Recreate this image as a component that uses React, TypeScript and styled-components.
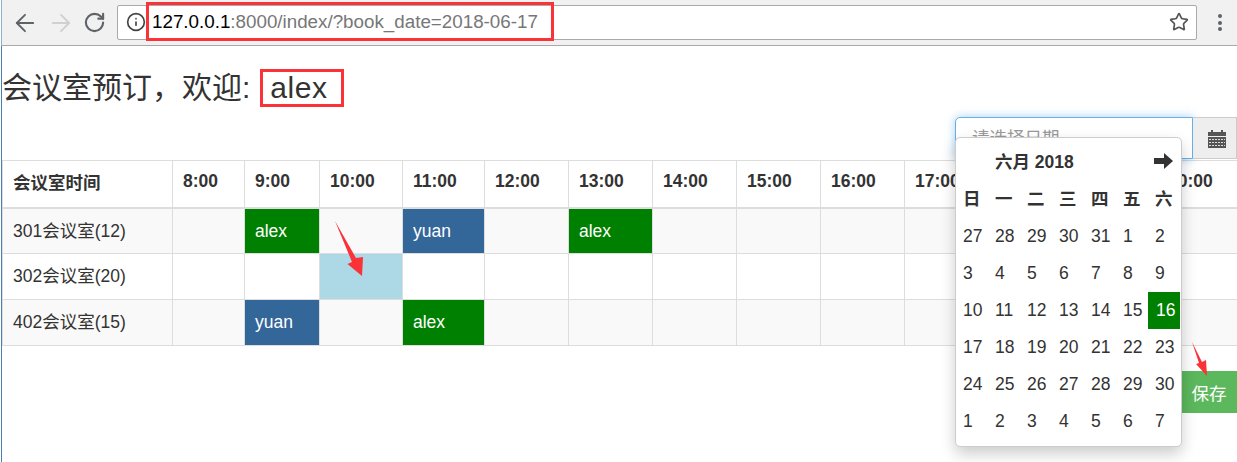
import React from "react";
import styled, { createGlobalStyle } from "styled-components";
import { ArrowLeft, ArrowRight, RotateCw, Info, Star } from "lucide-react";

const Global = createGlobalStyle`
  html, body { margin: 0; padding: 0; background: #fff; overflow: hidden; }
  body { font-family: "Liberation Sans", "Noto Sans CJK SC", sans-serif; font-size: 17.5px; color: #333; }
`;
const Page = styled.div`
  position: relative; width: 1237px; height: 462px; overflow: hidden;
`;
const Chrome = styled.div`
  height: 45px; background: #f1f1f1; border-bottom: 1px solid #a9a9a9; border-left: 1px solid #8fb0cf; margin-left: 1px;
  display: flex; align-items: center; padding: 0 0 0 9px;
`;
const NavIcons = styled.div`display: flex; align-items: center; gap: 8px; width: 106px; flex: none; color: #5f6368;`;
const Omnibox = styled.div`
  width: 1080px; height: 35px; box-sizing: border-box; margin-top: -1px; background: #fff; border: 1px solid #a9a9a9; border-radius: 2px;
  display: flex; align-items: center; padding: 0 7px 0 8px; gap: 6px; flex: none;
`;
const Url = styled.div`flex: 1; font-size: 18.8px; color: #777; white-space: nowrap;`;
const Host = styled.span`color: #000;`;
const Menu = styled.div`margin-left: 21px; display: flex; flex-direction: column; gap: 2.5px;`;
const MenuDot = styled.i`width: 4px; height: 4px; border-radius: 50%; background: #5f6368; display: block;`;
const Main = styled.main`border-left: 1px solid #4a7fb5; margin-left: 1px; height: 416px; display: flow-root;`;
const Title = styled.h2`
  margin: 25px 0 13px; font-size: 30px; font-weight: 400; line-height: 33px; color: #333; white-space: nowrap;
`;
const TitleName = styled.span`margin-left: 20px; letter-spacing: 0.5px;`;
const InputGroup = styled.div`margin-left: auto; width: 282px; height: 42px; display: flex;`;
const DateInput = styled.input`
  width: 238px; height: 42px; box-sizing: border-box; padding: 0 16px; font: inherit; color: #555;
  border: 1px solid #66afe9; border-radius: 5px 0 0 5px; outline: none;
  box-shadow: 0 0 10px rgba(102,175,233,.6);
  &::placeholder { color: #999; opacity: 1; }
`;
const Addon = styled.div`
  flex: 1; background: #eee; border: 1px solid #ccc; border-left: 0; display: flex; align-items: center;
  justify-content: center; padding-left: 4px;
`;
const Table = styled.table`
  margin-top: 1px; width: 1235px; table-layout: fixed; border-collapse: collapse; font-size: 17.5px;
`;
const Th = styled.th<{ $w: number }>`
  width: ${(p) => p.$w}px; height: 47px; box-sizing: border-box; padding: 0 10px 4px; text-align: left; font-weight: 700;
  border: 1px solid #ddd; border-bottom: 2px solid #ddd; white-space: nowrap;
`;
const Row = styled.tr<{ $odd: boolean }>`background: ${(p) => (p.$odd ? "#f9f9f9" : "#fff")};`;
const Td = styled.td<{ $bg?: string }>`
  height: 46px; box-sizing: border-box; padding: 8px 10px 0; border: 1px solid #ddd; vertical-align: baseline;
  background: ${(p) => p.$bg ?? "transparent"}; color: ${(p) => (p.$bg && p.$bg !== "#add8e6" ? "#fff" : "#333")};
  white-space: nowrap;
`;
const Save = styled.button`
  display: block; margin: 25px 0 0 auto; width: 56px; height: 42px; padding: 0; border: 0;
  background: #5cb85c; color: #fff; font: inherit;
`;
const Picker = styled.div`
  position: absolute; left: 955px; top: 137px; width: 227px; height: 310px; box-sizing: border-box;
  background: #fff; border: 1px solid #ccc; border-radius: 5px; box-shadow: 0 7px 15px rgba(0,0,0,.2); z-index: 2;
`;
const PickerHead = styled.div`
  height: 41px; display: flex; align-items: center; justify-content: space-between; padding: 2px 8px 0 39px; font-weight: 700;
`;
const Weeks = styled.div`display: grid; grid-template-columns: repeat(7, 32px);`;
const WeekDay = styled.div`height: 37px; line-height: 36px; padding-left: 7px; font-weight: 700; font-size: 17.5px;`;
const Day = styled.div<{ $active?: boolean }>`
  height: 37px; line-height: 37px; padding-left: ${(p) => (p.$active ? 8 : 7)}px;
  background: ${(p) => (p.$active ? "#008000" : "transparent")}; color: ${(p) => (p.$active ? "#fff" : "#333")};
`;
const RedBox = styled.div<{ $l: number; $t: number; $w: number; $h: number }>`
  position: absolute; left: ${(p) => p.$l}px; top: ${(p) => p.$t}px; width: ${(p) => p.$w}px; height: ${(p) => p.$h}px;
  box-sizing: border-box; border: 3px solid #f93338; z-index: 3;
`;
const Mark = styled.svg`position: absolute; left: 0; top: 0; z-index: 3; pointer-events: none;`;

const hours = ["8:00","9:00","10:00","11:00","12:00","13:00","14:00","15:00","16:00","17:00","18:00","19:00","20:00"];
const widths = [170,72,75,83,82,84,84,84,84,84,84,84,85,80];
type Cell = { text?: string; bg?: string };
const G = "#008000", B = "#336699";
const rooms: { name: string; cells: Record<number, Cell> }[] = [
  { name: "301会议室(12)", cells: { 1: { text: "alex", bg: G }, 3: { text: "yuan", bg: B }, 5: { text: "alex", bg: G } } },
  { name: "302会议室(20)", cells: { 2: { bg: "#add8e6" } } },
  { name: "402会议室(15)", cells: { 1: { text: "yuan", bg: B }, 3: { text: "alex", bg: G } } },
];
const weekdays = ["日","一","二","三","四","五","六"];
const days = [27,28,29,30,31,1,2,3,4,5,6,7,8,9,10,11,12,13,14,15,16,17,18,19,20,21,22,23,24,25,26,27,28,29,30,1,2,3,4,5,6,7];

const CalendarIcon = () => (
  <svg width="18" height="19" viewBox="0 0 18 19" fill="#555">
    <path d="M0 3h3V1h2v2h8V1h2v2h3v4H0z" />
    <path d="M0 8h18v11H0z" />
    <path stroke="#ddd" strokeWidth="1" strokeDasharray="2 1" d="M1 10.5h16M1 13.5h16M1 16.5h16" />
  </svg>
);

export default function App() {
  return (
    <Page>
      <Global />
      <Chrome>
        <NavIcons>
          <ArrowLeft size={28} strokeWidth={1.6} />
          <ArrowRight size={28} strokeWidth={1.6} color="#d0d0d0" />
          <RotateCw size={23} strokeWidth={2.2} />
        </NavIcons>
        <Omnibox>
          <Info size={20} strokeWidth={2} color="#444" />
          <Url><Host>127.0.0.1</Host>:8000/index/?book_date=2018-06-17</Url>
          <Star size={20} strokeWidth={2} color="#555" />
        </Omnibox>
        <Menu><MenuDot /><MenuDot /><MenuDot /></Menu>
      </Chrome>
      <Main>
        <Title>会议室预订，欢迎:<TitleName>alex</TitleName></Title>
        <InputGroup>
          <DateInput placeholder="请选择日期" />
          <Addon><CalendarIcon /></Addon>
        </InputGroup>
        <Table>
          <thead>
            <tr>
              <Th $w={widths[0]}>会议室时间</Th>
              {hours.map((h, i) => <Th key={h} $w={widths[i + 1]}>{h}</Th>)}
            </tr>
          </thead>
          <tbody>
            {rooms.map((r, ri) => (
              <Row key={r.name} $odd={ri % 2 === 0}>
                <Td>{r.name}</Td>
                {hours.map((h, i) => <Td key={h} $bg={r.cells[i]?.bg}>{r.cells[i]?.text}</Td>)}
              </Row>
            ))}
          </tbody>
        </Table>
        <Save>保存</Save>
      </Main>
      <Picker>
        <PickerHead>
          <span>六月 2018</span>
          <svg width="19" height="16" viewBox="0 0 19 16" fill="#333"><path d="M0 5h10V0l9 8-9 8v-5H0z" /></svg>
        </PickerHead>
        <Weeks>
          {weekdays.map((d) => <WeekDay key={d}>{d}</WeekDay>)}
          {days.map((d, i) => <Day key={i} $active={i === 20}>{d}</Day>)}
        </Weeks>
      </Picker>
      <RedBox $l={146} $t={2} $w={408} $h={39} />
      <RedBox $l={260} $t={69} $w={84} $h={38} />
      <Mark width="1237" height="462">
        <polygon points="335,221 356,258 363,257 362,276 347.5,264 352,262" fill="#f93338" />
        <polygon points="1192,342 1202,362 1206,360 1207,376 1196,364 1199,363" fill="#f93338" />
      </Mark>
    </Page>
  );
}
